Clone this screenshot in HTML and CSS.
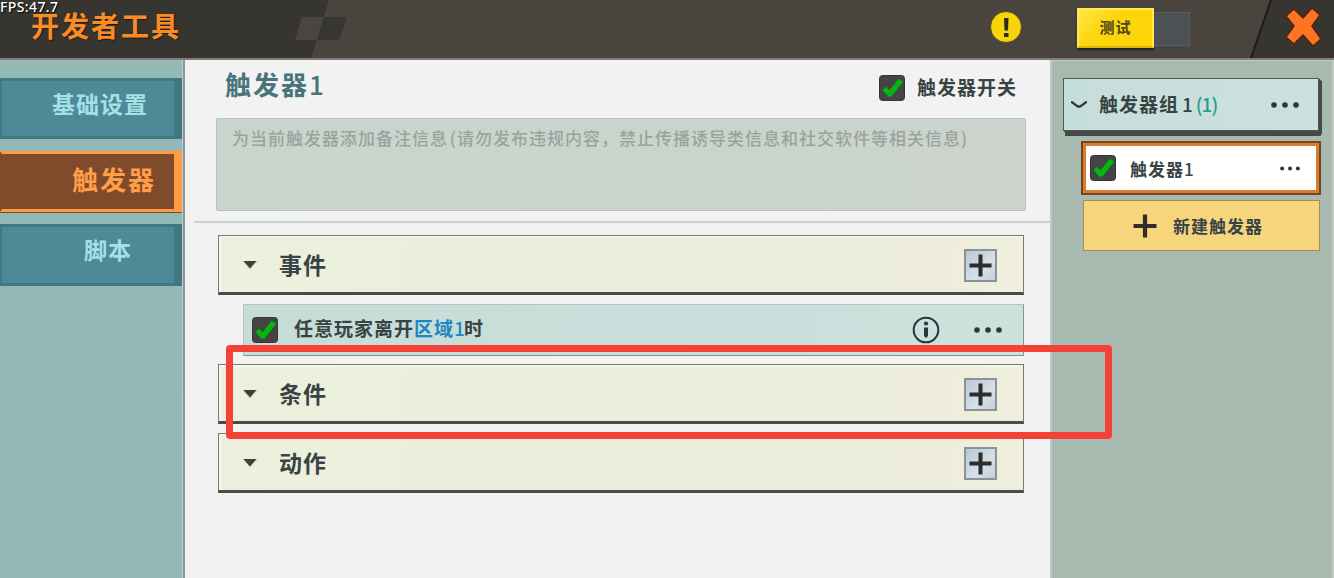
FILE: index.html
```
<!DOCTYPE html>
<html lang="zh-CN">
<head>
  <meta charset="UTF-8">
  <meta name="viewport" content="width=device-width, initial-scale=1.0">
  <title>开发者工具</title>
  <link rel="stylesheet" href="styles.css">
</head>
<body>
  <!-- 共用图标 -->
  <svg class="defs" width="0" height="0">
    <symbol id="check" viewBox="0 0 26 26">
      <rect x="0.5" y="0.5" width="25" height="25" rx="3" fill="#464347" stroke="#353536"/>
      <path d="M3 15 L7 11.5 L10.5 15 L19.5 3.5 L24.5 6.5 L12.5 22 L9.5 22 Z" fill="#08b412" stroke="#146c1c" stroke-width="0.8"/>
    </symbol>
    <symbol id="plus" viewBox="0 0 24 24">
      <path d="M12 0.5V23.5M0.5 12H23.5" stroke="#2f2c29" stroke-width="4.2"/>
    </symbol>
    <symbol id="dots" viewBox="0 0 28 6">
      <circle cx="3" cy="3" r="2.8"/><circle cx="14" cy="3" r="2.8"/><circle cx="25" cy="3" r="2.8"/>
    </symbol>
    <symbol id="arrow" viewBox="0 0 16 10">
      <path d="M0 1L8 9.5L16 1Z" fill="#d5d4c2"/>
      <path d="M1.5 1H14.5L8 8.5Z" fill="#433e32"/>
    </symbol>
  </svg>

  <div class="fps">FPS:47.7</div>

  <header class="header">
    <svg class="header-bg" viewBox="0 0 1334 58" width="1334" height="58">
      <path d="M329 0H1270L1251 58H311Z" fill="#4a443f"/>
      <path d="M302 17H324L317 40H295Z" fill="#4a4541"/>
      <path d="M324 17H347L339 40H317Z" fill="#383632"/>
      <path d="M1271 0L1251 58" stroke="#1c1b19" stroke-width="2"/>
    </svg>
    <h1 class="header-title">开发者工具</h1>
    <div class="warn">
      <svg viewBox="0 0 32 32" width="32" height="32">
        <circle cx="16" cy="16" r="15.5" fill="#f7d50d" stroke="#57471a"/>
        <path d="M14 7H18.5L18 19.5H14.5Z" fill="#302b16"/>
        <rect x="14" y="22" width="4.5" height="4" fill="#302b16"/>
      </svg>
    </div>
    <div class="toggle">
      <span class="toggle-on">测试</span>
      <span class="toggle-off"></span>
    </div>
    <svg class="close" viewBox="0 0 38 42" width="38" height="42">
      <path d="M2 10L10 3L19 12L28 2L36 9L28 20L37 33L29 40L19 29L10 38L2 31L10 20Z" fill="#ff7423" stroke="#52230f" stroke-width="1.5" stroke-linejoin="round"/>
    </svg>
  </header>

  <div class="layout">
    <nav class="sidebar">
      <div class="tab tab-wide">基础设置</div>
      <div class="tab tab-active">触发器</div>
      <div class="tab tab-script">脚本</div>
    </nav>

    <main class="main">
      <div class="main-head">
        <h2 class="main-title">触发器<span class="num">1</span></h2>
        <svg class="check"><use href="#check"/></svg>
        <span class="switch-label">触发器开关</span>
      </div>
      <div class="note">为当前触发器添加备注信息 (请勿发布违规内容，禁止传播诱导类信息和社交软件等相关信息)</div>

      <div class="blocks">
        <div class="block">
          <svg class="arrow"><use href="#arrow"/></svg>
          <span class="block-name">事件</span>
          <span class="add"><svg><use href="#plus"/></svg></span>
        </div>
        <div class="event">
          <svg class="check"><use href="#check"/></svg>
          <span class="event-text">任意玩家离开<span class="blue">区域<span class="num">1</span></span>时</span>
          <svg class="info" viewBox="0 0 28 28">
            <circle cx="14" cy="14" r="12.3" fill="none" stroke="#26373a" stroke-width="2"/>
            <circle cx="14" cy="7.5" r="2.1" fill="#26373a"/>
            <path d="M12 11.5H16V20L14 22L12 20Z" fill="#26373a"/>
          </svg>
          <svg class="dots"><use href="#dots"/></svg>
        </div>
        <div class="block">
          <svg class="arrow"><use href="#arrow"/></svg>
          <span class="block-name">条件</span>
          <span class="add"><svg><use href="#plus"/></svg></span>
        </div>
        <div class="block">
          <svg class="arrow"><use href="#arrow"/></svg>
          <span class="block-name">动作</span>
          <span class="add"><svg><use href="#plus"/></svg></span>
        </div>
      </div>
    </main>

    <aside class="panel">
      <div class="group">
        <svg class="chevron" viewBox="0 0 16 8"><path d="M1 1.2C4 3.2 6 5.8 8 5.8S12 3.2 15 1.2" fill="none" stroke="#2e3a3b" stroke-width="2.4" stroke-linecap="round"/></svg>
        <span class="group-name">触发器组<span class="num num-group">1</span><span class="num count">(1)</span></span>
        <svg class="dots"><use href="#dots"/></svg>
      </div>
      <div class="item">
        <svg class="check"><use href="#check"/></svg>
        <span class="item-name">触发器<span class="num">1</span></span>
        <svg class="dots dots-small"><use href="#dots"/></svg>
      </div>
      <div class="new-item">
        <svg class="new-plus"><use href="#plus"/></svg>
        <span class="new-name">新建触发器</span>
      </div>
    </aside>
  </div>

  <!-- 红色标注框 -->
  <div class="mark"></div>
</body>
</html>
```
FILE: styles.css
```
* {
  box-sizing: border-box;
}
body {
  margin: 0;
  width: 1334px;
  height: 578px;
  overflow: hidden;
  position: relative;
  display: flex;
  flex-direction: column;
  background: #f2f2f2;
  color: #384344;
  font-family: "Noto Sans CJK SC", sans-serif;
  font-weight: 700;
  line-height: 1;
}
svg {
  display: block;
  flex: none;
}
h1, h2 {
  margin: 0;
  white-space: nowrap;
}
.defs {
  position: absolute;
}
.fps {
  position: absolute;
  left: 0;
  top: -1px;
  z-index: 2;
  color: #fff;
  font: 500 14px/16px "Noto Sans", sans-serif;
  letter-spacing: 0.4px;
  text-shadow: 1px 1px 1px #000;
}
.num {
  font-weight: 500;
  letter-spacing: -1px;
}

/* 顶部 */
.header {
  position: relative;
  height: 60px;
  flex: none;
  display: flex;
  align-items: flex-start;
  background: #363530;
  border-bottom: 2px solid #827d7a;
}
.header-bg {
  position: absolute;
  left: 0;
  top: 0;
}
.header-title {
  position: relative;
  width: 300px;
  padding: 11px 0 0 31px;
  margin-right: 690px;
  color: #fa8b27;
  font-size: 28px;
  line-height: 28px;
  letter-spacing: 2px;
  text-shadow: 1px 1px 1px #1e1c18;
}
.warn {
  position: relative;
  margin: 11px 55px 0 0;
}
.toggle {
  position: relative;
  display: flex;
  width: 113px;
  margin: 8px 94px 0 0;
  align-items: center;
}
.toggle-on {
  width: 77px;
  height: 40px;
  border: 2px solid #ffe957;
  border-bottom-color: #e0b50b;
  background: linear-gradient(135deg, #ffe548, #fdd50c 40%, #fcd407);
  box-shadow: 0 2px 2px #25231e;
  color: #4c431d;
  font-size: 15px;
  line-height: 34px;
  letter-spacing: 1px;
  text-align: center;
}
.toggle-off {
  width: 36px;
  height: 34px;
  margin-top: 1px;
  background: #4d5055;
  border: 1px solid #5b5c5f;
  border-left: 0;
}
.close {
  position: relative;
  margin-top: 6px;
}

.layout {
  flex: 1;
  display: flex;
}

/* 左侧标签 */
.sidebar {
  width: 185px;
  flex: none;
  padding-top: 18px;
  background: linear-gradient(#93bab7, #92b8b8);
  border-right: 2px solid #8a9695;
  box-shadow: inset -1px 0 #b9cfcd;
}
.tab {
  width: 182px;
  height: 61px;
  margin-bottom: 12px;
  border: solid #417982;
  border-width: 3px 8px 3px 2px;
  background: #4d8996;
  color: #a4e0e8;
  font-size: 23px;
  line-height: 45px;
  letter-spacing: 1px;
  white-space: nowrap;
}
.tab-wide {
  padding-left: 50px;
}
.tab-active {
  height: 61px;
  padding-left: 70px;
  border-color: #ff9b43;
  border-left-color: #7f4b2b;
  background: #7f4b2b;
  box-shadow: 0 1px #6d5030;
  color: #ff9d48;
  font-size: 26px;
  line-height: 49px;
  letter-spacing: 2px;
}
.tab-script {
  height: 62px;
  padding-left: 82px;
}

/* 中间内容 */
.main {
  width: 865px;
  flex: none;
}
.main-head {
  height: 58px;
  display: flex;
  align-items: flex-start;
  padding-left: 40px;
}
.main-title {
  width: 654px;
  padding-top: 10px;
  color: #48747a;
  font-size: 26px;
  line-height: 28px;
  letter-spacing: 2px;
}
.check {
  width: 26px;
  height: 26px;
}
.main-head .check {
  margin-top: 15px;
}
.switch-label {
  margin: 17px 0 0 12px;
  font-size: 19px;
  line-height: 20px;
  letter-spacing: 1px;
}
.note {
  width: 810px;
  height: 93px;
  margin-left: 31px;
  padding: 10px 0 0 15px;
  border: 1px solid #b9c1bb;
  border-radius: 2px;
  background: linear-gradient(90deg, #c8d5cd, #cbd3cc);
  color: #99a39e;
  font-size: 17px;
  font-weight: 500;
  line-height: 18px;
  letter-spacing: 1px;
  word-spacing: -3px;
  white-space: nowrap;
}
.blocks {
  margin: 10px 0 0 9px;
  padding: 12px 26px 0 24px;
  border-top: 2px solid #cbd0d0;
}
.block {
  height: 60px;
  margin-bottom: 9px;
  padding: 0 26px 0 23px;
  display: flex;
  align-items: center;
  border: 1px solid #7c7b70;
  border-bottom: 3px solid #4b4b48;
  background: linear-gradient(100deg, #eef0de, #ebeddd 60%, #f0eedd);
  box-shadow: inset 2px 2px #f5f5e8;
}
.arrow {
  width: 16px;
  height: 10px;
  margin-top: 2px;
}
.block-name {
  flex: 1;
  margin-left: 21px;
  padding-top: 1px;
  font-size: 23px;
  letter-spacing: 1px;
}
.add {
  width: 33px;
  height: 33px;
  margin-top: 3px;
  display: flex;
  align-items: center;
  justify-content: center;
  border: 2px solid #8b9298;
  background: linear-gradient(135deg, #b8c9d3, #d6e0e8 60%, #c3d0da);
}
.add svg {
  width: 23px;
  height: 23px;
}
.event {
  height: 52px;
  margin: 0 0 8px 25px;
  padding: 0 21px 0 8px;
  display: flex;
  align-items: center;
  border: 1px solid #b5c7c0;
  border-right-color: #879591;
  border-bottom-color: #7f948a;
  background: linear-gradient(90deg, #c5dcd7, #cde1dd);
}
.event-text {
  flex: 1;
  margin: -6px 0 0 16px;
  font-size: 19px;
  letter-spacing: 1px;
}
.blue {
  color: #1f86c4;
}
.info {
  width: 28px;
  height: 28px;
  margin-right: 34px;
}
.dots {
  width: 28px;
  height: 6px;
  fill: #2b3738;
}

/* 右侧面板 */
.panel {
  width: 284px;
  padding: 17px 11px 0 11px;
  border: solid #bfccc3;
  border-width: 1px 2px 0 2px;
  background: #a8bab0;
}
.group {
  width: 256px;
  height: 53px;
  display: flex;
  align-items: center;
  margin-bottom: 10px;
  padding: 0 19px 0 7px;
  border: 1px solid #4a5856;
  background: linear-gradient(90deg, #c6deda, #cce1df);
  box-shadow: 1px 1px #454a49, 2px 2px #454a49, 3px 3px #454a49, 2px 5px #454a49;
}
.chevron {
  width: 16px;
  height: 8px;
}
.group-name {
  flex: 1;
  margin: -2px 0 0 12px;
  font-size: 19px;
  letter-spacing: 1px;
  white-space: nowrap;
}
.num-group {
  margin-left: 3px;
}
.count {
  margin-left: 4px;
  color: #2b9e91;
}
.item {
  width: 240px;
  height: 54px;
  margin: 0 0 5px 18px;
  padding: 0 19px 0 7px;
  display: flex;
  align-items: center;
  border: 2px solid #78451c;
  background: #fff;
  box-shadow: inset 0 0 0 3px #d97a31;
}
.item-name {
  flex: 1;
  margin-left: 14px;
  font-size: 17px;
  letter-spacing: 1px;
}
.dots-small {
  width: 20px;
  height: 5px;
}
.new-item {
  width: 237px;
  height: 51px;
  margin-left: 20px;
  padding-left: 49px;
  display: flex;
  align-items: center;
  gap: 16px;
  border: 1px solid #a28d57;
  background: #f6d57d;
  font-size: 17px;
  letter-spacing: 1px;
}
.new-plus {
  width: 24px;
  height: 24px;
}

.mark {
  position: absolute;
  left: 226px;
  top: 345px;
  width: 886px;
  height: 94px;
  border: 7px solid #f44236;
  border-radius: 4px;
}
```
